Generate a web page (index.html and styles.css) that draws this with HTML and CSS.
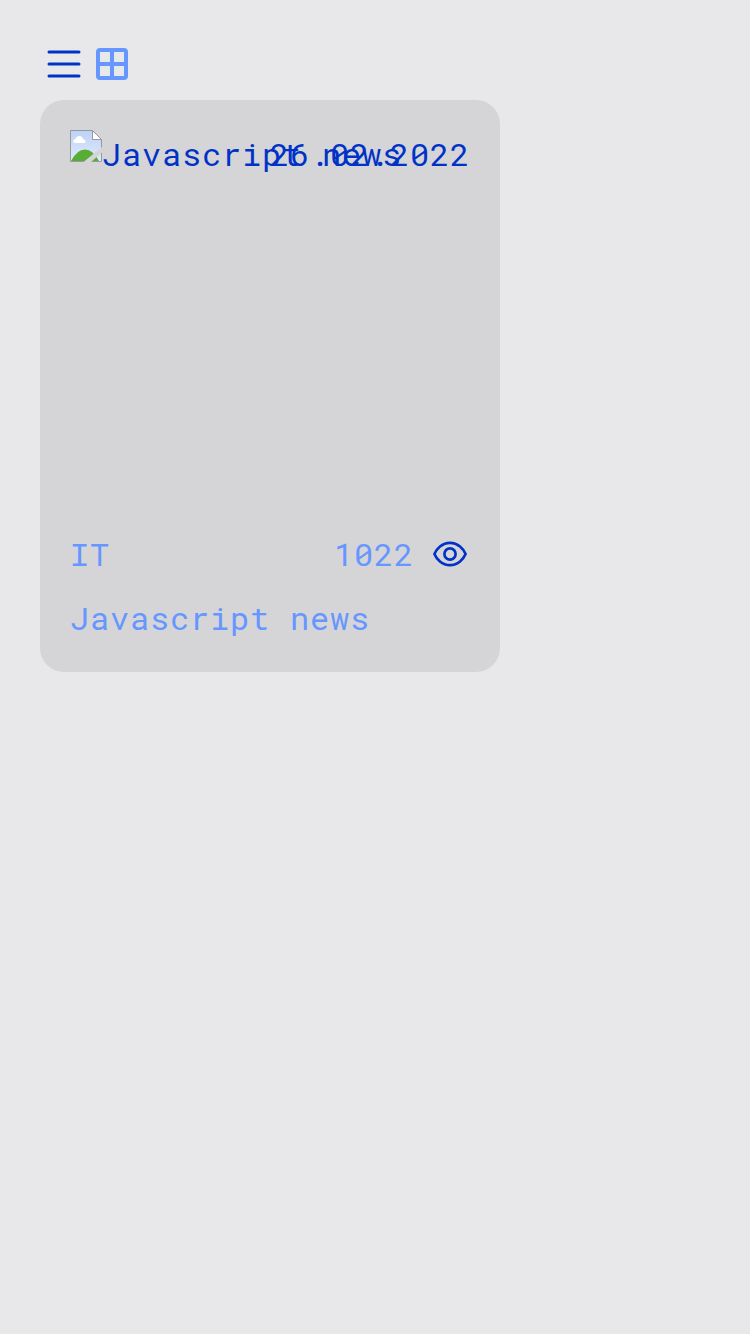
FILE: index.html
```html
<!DOCTYPE html>
<html lang="en">
<head>
<meta charset="utf-8">
<title>News</title>
<link rel="stylesheet" href="styles.css">
</head>
<body>
<main class="page">
  <nav class="views" aria-label="View">
    <svg class="icon" viewBox="0 0 48 48"><path class="line dark" d="M9 12H39M9 24H39M9 36H39"/></svg>
    <svg class="icon" viewBox="0 0 48 48"><path class="grid" fill-rule="evenodd" d="M12 8H36Q40 8 40 12V36Q40 40 36 40H12Q8 40 8 36V12Q8 8 12 8ZM12 12V22H22V12ZM26 12V22H36V12ZM12 26V36H22V26ZM26 26V36H36V26Z"/></svg>
  </nav>
  <article class="card">
    <div class="cover">
      <svg class="missing" viewBox="0 0 32 32">
        <defs><linearGradient id="sky" x2="0" y2="1"><stop stop-color="#bdd2f7"/><stop offset="1" stop-color="#e1eafb"/></linearGradient></defs>
        <path fill="url(#sky)" d="M0 0H22L32 10V32H0Z"/>
        <path fill="#fff" d="M5.500 13C2.500 13 2.500 9 5.500 9Q6.500 6 9.500 6Q12 6 13 9Q16.500 10 15 13Z"/>
        <path fill="#58ad37" d="M1 31Q7 19.500 15 19.500Q23 19.500 29 31Z"/>
        <path fill="#fff" d="M22 1L31 9H22Z"/>
        <path fill="none" stroke="#96999d" d="M.5 .5H22.500L31.500 9.500V31.500H.5ZM22.500 .5V9.500H31.500"/>
        <path fill="#d5d5d7" d="M32 17V22.500L21 32H13.500Z"/>
      </svg>
      <span class="alt">Javascript news</span>
      <time class="date">26.02.2022</time>
    </div>
    <div class="meta">
      <span>IT</span>
      <span class="views-count">1022<svg class="eye" viewBox="0 0 36 28"><path class="line dark" d="M2.400 14C4.500 9 10 2.800 18 2.800S31.500 9 33.600 14C31.500 19 26 25.200 18 25.200S4.500 19 2.400 14Z"/><circle class="line dark" cx="18" cy="14" r="5.600"/></svg></span>
    </div>
    <div class="title">Javascript news</div>
  </article>
</main>
</body>
</html>
```
FILE: styles.css
```css
body {
  margin: 0;
  background: #e8e8ea;
  color: #6696ff;
  font: 32px/48px "Roboto Mono", "DejaVu Sans Mono", monospace;
  letter-spacing: 0.8px;
}
.page { padding: 40px; }
.views { display: flex; height: 60px; }
.icon { width: 48px; height: 48px; }
.line { fill: none; stroke-width: 2.7; stroke-linecap: round; stroke-linejoin: round; }
.dark { stroke: #0032c8; }
.icon .line { stroke-width: 3; }
.grid { fill: #6696ff; }
.card {
  box-sizing: border-box;
  width: 460px;
  height: 572px;
  padding: 30px;
  border-radius: 24px;
  background: #d5d5d7;
}
.cover { position: relative; display: flex; height: 400px; color: #0032c8; white-space: nowrap; }
.missing { width: 32px; height: 32px; }
.date { position: absolute; top: 0; right: 0; }
.meta { display: flex; justify-content: space-between; }
.views-count { display: flex; align-items: center; gap: 18px; }
.eye { width: 36px; height: 28px; margin-right: 2px; }
.title { margin-top: 16px; }
```
